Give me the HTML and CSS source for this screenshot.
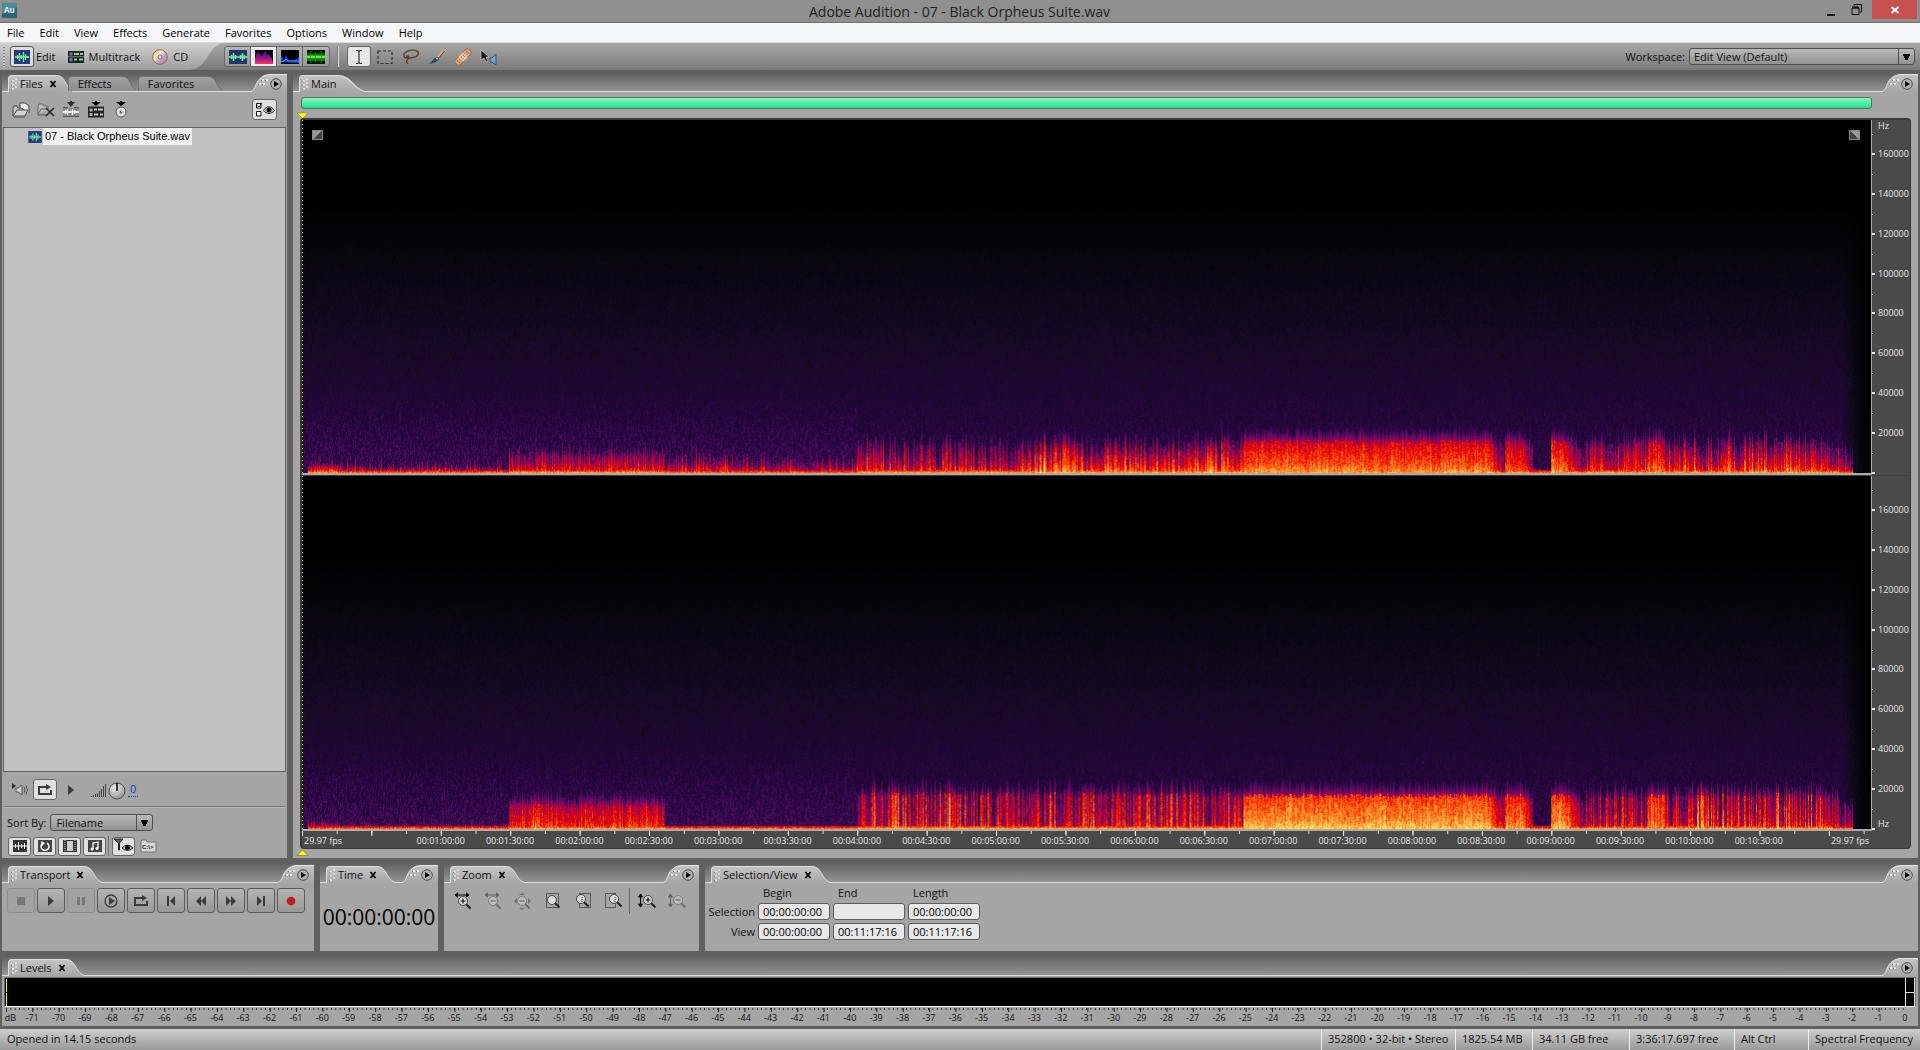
FILE: index.html
```html
<!DOCTYPE html>
<html lang="en">
<head>
<meta charset="utf-8">
<title>Adobe Audition - 07 - Black Orpheus Suite.wav</title>
<link rel="stylesheet" href="styles.css">
</head>
<body>
<svg class="defs" aria-hidden="true">
  <defs>
    <linearGradient id="tabFill" x1="0" y1="0" x2="0" y2="1"><stop offset="0" stop-color="#c4c4c4"/><stop offset="1" stop-color="#a6a6a6"/></linearGradient>
    <linearGradient id="tabDim" x1="0" y1="0" x2="0" y2="1"><stop offset="0" stop-color="#a2a2a2"/><stop offset="1" stop-color="#8c8c8c"/></linearGradient>
    <linearGradient id="barFill" x1="0" y1="0" x2="0" y2="1"><stop offset="0" stop-color="#cfcfcf"/><stop offset="1" stop-color="#9e9e9e"/></linearGradient>
    <radialGradient id="knob" cx=".4" cy=".3" r=".8"><stop offset="0" stop-color="#eee"/><stop offset="1" stop-color="#888"/></radialGradient>
    <linearGradient id="disc" x1="0" y1="0" x2="1" y2="1"><stop offset="0" stop-color="#f0a050"/><stop offset=".35" stop-color="#fff0b0"/><stop offset=".6" stop-color="#b8a0e0"/><stop offset="1" stop-color="#d08030"/></linearGradient>
    <linearGradient id="pinkSpec" x1="0" y1="0" x2="0" y2="1"><stop offset="0" stop-color="#3a1080"/><stop offset=".6" stop-color="#a0188c"/><stop offset="1" stop-color="#ff3060"/></linearGradient>
  </defs>
  <symbol id="i-wave" viewBox="0 0 16 14"><rect width="16" height="14" fill="#2a3a7c"/><path d="M1 7h14M3.500 5v4M5.500 3v8M7.500 5v4M9.500 2v10M11.500 4v6M13.500 6v2" stroke="#6df29a" stroke-width="1.300" fill="none"/></symbol>
  <symbol id="i-wave2" viewBox="0 0 18 14"><rect width="18" height="14" fill="#26346f"/><path d="M0 7h18M2.500 5v4M4.500 3v8M6.500 5v4M11.500 5v4M13.500 3v8M15.500 5v4" stroke="#6df29a" stroke-width="1.600" fill="none"/></symbol>
  <symbol id="i-spec" viewBox="0 0 18 14"><rect width="18" height="14" fill="#08040c"/><path d="M0 14V8l2-5 2-1 1 3 2 1 2-4 2-1 1 4 2-1 1 3 2 1 1 6z" fill="url(#pinkSpec)"/></symbol>
  <symbol id="i-pan" viewBox="0 0 18 14"><rect width="18" height="14" fill="#000"/><path d="M0 12V6l2 2 1 2 2-5 2 4 2 1 3 0 3-1 3-2v6z" fill="#1240d8"/><path d="M0 12l3-1 2-2 2 2h11" stroke="#3c8cff" fill="none"/></symbol>
  <symbol id="i-phase" viewBox="0 0 18 14"><rect width="18" height="14" fill="#021a02"/><path d="M0 4.500h18M0 10h18" stroke="#0c7a10" stroke-width="2"/><path d="M0 7h18" stroke="#54f030" stroke-width="3"/><path d="M3.500 1v12M8.500 2v10M14.500 1v12" stroke="#1c9a1c" opacity=".6"/></symbol>
  <symbol id="i-multi" viewBox="0 0 16 12"><rect width="16" height="12" fill="#1c2020"/><path d="M1.500 1.500h3v3h-3zM1.500 7h3v3.500h-3z" fill="#6a7a9a"/><path d="M6 3h5M12 3h3M6 8.500h3M11 8.500h4" stroke="#8ccf98" stroke-width="2.200"/><path d="M0 5.700h16" stroke="#aaa" stroke-width=".7"/></symbol>
  <symbol id="i-cd" viewBox="0 0 16 16"><circle cx="8" cy="8" r="7.300" fill="url(#disc)" stroke="#7a5c40" stroke-width=".8"/><circle cx="8" cy="8" r="2" fill="#ddd" stroke="#777"/></symbol>
  <symbol id="i-ibeam" viewBox="0 0 16 16"><path d="M5 1.500h2L8 2.500l1-1h2M5 14.500h2l1-1 1 1h2M8 2.500v11" stroke="#333" fill="none" stroke-width="1.200"/></symbol>
  <symbol id="i-marquee" viewBox="0 0 16 16"><rect x="1" y="2" width="14" height="12.500" fill="none" stroke="#2c2c34" stroke-dasharray="3 2" stroke-width="1.200"/></symbol>
  <symbol id="i-lasso" viewBox="0 0 18 16"><path d="M5 9C1 9 1 5 4 3s10-3 12 0-3 6-8 6c-3 0-4-1-3-2s3 1 1 3-1 4 0 5" fill="none" stroke="#5c4028" stroke-width="1.400"/></symbol>
  <symbol id="i-brush" viewBox="0 0 18 16"><path d="M16 1L9 9" stroke="#d8b078" stroke-width="2"/><path d="M16.500 2L10 10" stroke="#604020"/><path d="M10 8l1 2c-2 3-5 4-10 5 3-2 4-5 6-6z" fill="#24486c"/><path d="M8 9l2 1" stroke="#cfe0f0"/></symbol>
  <symbol id="i-heal" viewBox="0 0 18 18"><g transform="rotate(-45 9 9)"><rect x="-1" y="5.500" width="20" height="7" rx="3.500" fill="#d9a27c" stroke="#946448" stroke-width=".8"/><rect x="6" y="5.500" width="6" height="7" fill="#eec8a8"/><path d="M2 8h1M2 10h1M7.500 8h1M7.500 10h1M10 8h1M10 10h1M15 8h1M15 10h1" stroke="#7c4c34"/></g></symbol>
  <symbol id="i-scrub" viewBox="0 0 18 16"><path d="M1 1v10l3-2 2 4 2-1-2-4h3z" fill="#111" stroke="#ddd" stroke-width=".6"/><path d="M10 9h2l4-4v11l-4-3h-2z" fill="#7aa8cc" stroke="#24405c" stroke-width=".8"/></symbol>
  <symbol id="i-open" viewBox="0 0 18 16"><path d="M8 7V1h5l4 3v7" fill="#eee" stroke="#444"/><path d="M1 14V6l1-2h3l1 2h3l2 1v1" fill="#c8c8c8" stroke="#444"/><path d="M1 14l4-6h11l-3 6z" fill="#d4d4d4" stroke="#444"/><path d="M2 15.500h11" stroke="#777"/></symbol>
  <symbol id="i-close" viewBox="0 0 18 16"><path d="M1 13V4l1-2h4l1 2h4v3M1 13l3-6h7" fill="#bcbcbc" stroke="#666"/><path d="M1 13h9" stroke="#555"/><path d="M9 6l8 8M17 6l-8 8" stroke="#222" stroke-width="1.500"/></symbol>
  <symbol id="i-insw" viewBox="0 0 16 17"><path d="M4 1h8L8 6zM7 0h2v2H7z" fill="#333"/><path d="M0 6.500h5M11 6.500h5M0 15.500h16" stroke="#555"/><rect y="7" width="16" height="8" fill="#888"/><path d="M0 11h16M2.500 9v4M4.500 8v6M6.500 10v2M9.500 8v6M11.500 9v4M13.500 10v2" stroke="#fff" stroke-width="1.300"/></symbol>
  <symbol id="i-insm" viewBox="0 0 16 17"><path d="M3 1h10L8 5zM7 0h2v2H7z" fill="#000"/><rect y="5.500" width="16" height="11" fill="#222"/><path d="M1.500 7.500h3v3h-3zM1.500 12h3v3h-3z" fill="#aaa"/><path d="M6 8.500h3M10 8.500h5M6 13.500h4M12 13.500h3" stroke="#c8c8c8" stroke-width="1.800"/></symbol>
  <symbol id="i-inscd" viewBox="0 0 14 17"><path d="M2 1h10L7 5zM6 0h2v2H6z" fill="#000"/><circle cx="7" cy="11" r="5" fill="#ddd" stroke="#555"/><circle cx="7" cy="11" r="1.500" fill="#555"/><path d="M7 11l4-3" stroke="#fff"/></symbol>
  <symbol id="i-opts" viewBox="0 0 20 14"><path d="M1.500.500h4.500v4.500H1.500zM1.500 8.500h4.500v4.500H1.500z" fill="#fff" stroke="#111"/><path d="M2.500 2.500l1.500 1.500 3-4" stroke="#111" fill="none"/><path d="M8.500 7.500c2.500-5 8-5 11 0-3 4-8 4-11 0z" fill="#bbb" stroke="#333"/><circle cx="14" cy="7" r="2.500" fill="#111"/></symbol>
  <symbol id="i-speaker" viewBox="0 0 16 14"><path d="M0 0v6l4-3z" fill="#333"/><path d="M4 5h2l4-3v10L6 9H4z" fill="#ccc" stroke="#555"/><path d="M12 4q2 3 0 6M14 2.500q3 4.500 0 9" stroke="#555" fill="none"/></symbol>
  <symbol id="i-loop" viewBox="0 0 16 12"><path d="M5 3H2v7h12V6" fill="none" stroke="#3c3c3c" stroke-width="2"/><path d="M5 3h4" stroke="#3c3c3c" stroke-width="2"/><path d="M9 0l5 3-5 3z" fill="#3c3c3c"/></symbol>
  <symbol id="i-play" viewBox="0 0 10 12"><path d="M2 1l6 5-6 5z" fill="#3c3c3c"/></symbol>
  <symbol id="i-stop" viewBox="0 0 10 10"><rect x="1" y="1" width="8" height="8" fill="#777"/></symbol>
  <symbol id="i-pause" viewBox="0 0 10 10"><path d="M1 1h3v8H1zM6 1h3v8H6z" fill="#777"/></symbol>
  <symbol id="i-playc" viewBox="0 0 14 14"><circle cx="7" cy="7" r="6" fill="none" stroke="#3c3c3c" stroke-width="1.300"/><path d="M5 3l6 4-6 4z" fill="#3c3c3c"/></symbol>
  <symbol id="i-begin" viewBox="0 0 12 12"><path d="M2 1h2v10H2zM10 1v10L5 6z" fill="#3c3c3c"/></symbol>
  <symbol id="i-rew" viewBox="0 0 12 12"><path d="M6 1v10L1 6zM11 1v10L6 6z" fill="#3c3c3c"/></symbol>
  <symbol id="i-ff" viewBox="0 0 12 12"><path d="M1 1v10l5-5zM6 1v10l5-5z" fill="#3c3c3c"/></symbol>
  <symbol id="i-end" viewBox="0 0 12 12"><path d="M8 1h2v10H8zM2 1v10l5-5z" fill="#3c3c3c"/></symbol>
  <symbol id="i-rec" viewBox="0 0 10 10"><circle cx="5" cy="5" r="4.300" fill="#c01c1c"/></symbol>
  <symbol id="i-dots" viewBox="0 0 7 13"><path d="M1 2h2v2H1zM1 6h2v2H1zM1 10h2v2H1zM4 4h2v2H4zM4 8h2v2H4zM4 0h2v2H4z" fill="#ddd"/><path d="M0 3h1v1H0zM0 7h1v1H0zM0 11h1v1H0z" fill="#777"/></symbol>
  <symbol id="i-menu" viewBox="0 0 36 18"><path d="M0 17.500C5 16 4 9 9 4.500Q13 .5 18 .5H36V18H0z" fill="url(#tabFill)"/><path d="M0 17.500C5 16 4 9 9 4.500Q13 .5 18 .5H36" fill="none" stroke="#e4e4e4"/><path d="M8 9h2v2H8zM12 9h2v2h-2zM11 5h2v2h-2zM15 5h2v2h-2z" fill="#e4e4e4"/><path d="M7 10h1v1H7zM11 10h1v1h-1zM10 6h1v1h-1zM14 6h1v1h-1z" fill="#777"/><circle cx="25" cy="10" r="5.300" fill="#b0b0b0" stroke="#4c4c4c"/><path d="M23 7v6l5-3z" fill="#000"/></symbol>
  <symbol id="i-curve" viewBox="0 0 18 17" preserveAspectRatio="none"><path d="M0 .5C10 .5 9 13 18 16.500V17H0z" fill="url(#tabFill)"/><path d="M0 .5C10 .5 9 13 18 16.500" fill="none" stroke="#dedede"/></symbol>
  <symbol id="i-curvedim" viewBox="0 0 18 17" preserveAspectRatio="none"><path d="M0 1.500C10 1.500 9 13 16 16V17H0z" fill="url(#tabDim)"/><path d="M0 1.500C10 1.500 9 13 16 16" fill="none" stroke="#6a6a6a"/></symbol>
  <symbol id="i-x" viewBox="0 0 8 8"><path d="M1.500 1l5 6M6.500 1l-5 6" stroke="#000" stroke-width="1.700"/></symbol>
  <symbol id="i-lens" viewBox="0 0 16 16"><path d="M9.500 9.500l5 5" stroke="#222" stroke-width="2"/><circle cx="7" cy="7" r="4.500" fill="#ddd" stroke="#444"/></symbol>
  <symbol id="i-harrow" viewBox="0 0 16 6"><path d="M1 3h14M4 .8L1 3l3 2.200M12 .8L15 3l-3 2.200" stroke="#000" fill="#000"/></symbol>
  <symbol id="i-plus" viewBox="0 0 6 6"><path d="M.5 3h5M3 .5v5" stroke="#111" stroke-width="1.200"/></symbol>
  <symbol id="i-minus" viewBox="0 0 6 6"><path d="M.5 3h5" stroke="#111" stroke-width="1.200"/></symbol>
</svg>

<div class="app">
  <header class="titlebar">
    <svg class="logo" viewBox="0 0 15 15"><rect width="15" height="15" fill="#2c6474"/><path d="M0 0h15v4L0 11z" fill="#4a8a98"/><text x="2" y="10" class="logo-text">Au</text></svg>
    <h1>Adobe Audition - 07 - Black Orpheus Suite.wav</h1>
    <div class="winbtns">
      <button aria-label="Minimize"><svg width="12" height="14"><path d="M2 12h8" stroke="#111" stroke-width="2"/></svg></button>
      <button aria-label="Restore"><svg width="12" height="12"><path d="M3 2V.5h7.500V8H9" fill="none" stroke="#111"/><path d="M1 4h7v6.500H1z" fill="none" stroke="#111"/><path d="M1 3.500h7" stroke="#111" stroke-width="2"/></svg></button>
      <button class="close" aria-label="Close"><svg width="10" height="10"><path d="M1.500 2l7 6M8.500 2l-7 6" stroke="#fff" stroke-width="1.800"/></svg></button>
    </div>
  </header>

  <nav class="menubar">
    <a href="#">File</a><a href="#">Edit</a><a href="#">View</a><a href="#">Effects</a><a href="#">Generate</a><a href="#">Favorites</a><a href="#">Options</a><a href="#">Window</a><a href="#">Help</a>
  </nav>

  <div class="toolbar">
    <div class="modes">
      <i class="grip"></i>
      <button class="mode"><span class="framed"><svg width="16" height="14"><use href="#i-wave"/></svg></span>Edit</button>
      <button class="mode"><svg width="16" height="12"><use href="#i-multi"/></svg>Multitrack</button>
      <button class="mode"><svg width="16" height="16"><use href="#i-cd"/></svg>CD</button>
    </div>
    <svg class="modes-end" viewBox="0 0 36 27"><path d="M0 0h36C18 2 22 26 0 27z" fill="url(#barFill)"/></svg>
    <div class="views">
      <button aria-label="Waveform view"><svg width="18" height="14"><use href="#i-wave2"/></svg></button>
      <button class="on" aria-label="Spectral frequency view"><svg width="18" height="14"><use href="#i-spec"/></svg></button>
      <button aria-label="Spectral pan view"><svg width="18" height="14"><use href="#i-pan"/></svg></button>
      <button aria-label="Spectral phase view"><svg width="18" height="14"><use href="#i-phase"/></svg></button>
    </div>
    <i class="sep"></i>
    <div class="tools">
      <button class="on" aria-label="Time selection"><svg width="16" height="16"><use href="#i-ibeam"/></svg></button>
      <button aria-label="Marquee selection"><svg width="16" height="16"><use href="#i-marquee"/></svg></button>
      <button aria-label="Lasso selection"><svg width="18" height="16"><use href="#i-lasso"/></svg></button>
      <button aria-label="Effects paintbrush"><svg width="18" height="16"><use href="#i-brush"/></svg></button>
      <button aria-label="Spot healing"><svg width="18" height="18"><use href="#i-heal"/></svg></button>
      <button aria-label="Scrub"><svg width="18" height="16"><use href="#i-scrub"/></svg></button>
    </div>
    <label class="wslabel" for="ws">Workspace:</label>
    <span class="drop ws"><select id="ws"><option>Edit View (Default)</option></select></span>
  </div>

  <div class="work">
    <section class="panel files">
      <div class="head">
        <button class="tab"><svg width="7" height="13"><use href="#i-dots"/></svg>Files<svg class="x" width="8" height="8"><use href="#i-x"/></svg></button><svg class="curve" width="16" height="17"><use href="#i-curve"/></svg>
        <button class="tab dim">Effects</button><svg class="curve" width="16" height="17"><use href="#i-curvedim"/></svg>
        <button class="tab dim">Favorites</button><svg class="curve" width="16" height="17"><use href="#i-curvedim"/></svg>
        <svg class="pmenu" width="36" height="18"><use href="#i-menu"/></svg>
      </div>
      <div class="filebar">
        <button aria-label="Import file"><svg width="18" height="16"><use href="#i-open"/></svg></button>
        <button aria-label="Close file"><svg width="18" height="16"><use href="#i-close"/></svg></button>
        <button aria-label="Edit file"><svg width="16" height="17"><use href="#i-insw"/></svg></button>
        <button aria-label="Insert into multitrack"><svg width="16" height="17"><use href="#i-insm"/></svg></button>
        <button aria-label="Insert into CD"><svg width="14" height="17"><use href="#i-inscd"/></svg></button>
        <button class="boxed last" aria-label="Show options"><svg width="20" height="14"><use href="#i-opts"/></svg></button>
      </div>
      <ul class="filelist">
        <li><svg width="14" height="12" viewBox="0 0 16 14"><use href="#i-wave"/></svg><span>07 - Black Orpheus Suite.wav</span></li>
      </ul>
      <div class="preview">
        <svg width="16" height="14"><use href="#i-speaker"/></svg>
        <button class="boxed" aria-label="Loop preview"><svg width="16" height="12"><use href="#i-loop"/></svg></button>
        <button class="plain" aria-label="Play preview"><svg width="10" height="12"><use href="#i-play"/></svg></button>
        <svg width="16" height="14"><path d="M.5 14v-1M2.500 14v-2M4.500 14v-3M6.500 14v-4M8.500 14v-6M10.500 14v-8M12.500 14v-11M14.500 14v-13" stroke="#444"/></svg>
        <svg class="knob" width="18" height="18"><circle cx="9" cy="9" r="8" fill="url(#knob)" stroke="#555"/><path d="M9 9V1" stroke="#000" stroke-width="1.500"/></svg>
        <a class="vol" href="#">0</a>
      </div>
      <div class="sort">
        <label for="sort">Sort By:</label>
        <span class="drop"><select id="sort"><option>Filename</option></select></span>
      </div>
      <div class="filters">
        <button class="boxed" aria-label="Show audio files"><svg width="14" height="12"><rect width="14" height="12" fill="#333"/><path d="M0 6h14M2.500 4v4M5.500 2v8M8.500 4v4M11.500 3v6" stroke="#fff"/></svg></button>
        <button class="boxed" aria-label="Show loop files"><svg width="14" height="12"><rect width="14" height="12" fill="#444"/><path d="M5 3a4 4 0 1 0 4 0" fill="none" stroke="#fff" stroke-width="1.500"/><path d="M3 1l4 2-3 3z" fill="#fff"/></svg></button>
        <button class="boxed" aria-label="Show video files"><svg width="14" height="12"><rect width="14" height="12" fill="#333"/><path d="M4 1h6v10H4z" fill="#ccc"/><path d="M2 0v12M12 0v12" stroke="#ddd" stroke-dasharray="1 1"/></svg></button>
        <button class="boxed" aria-label="Show MIDI files"><svg width="14" height="12"><rect width="14" height="12" fill="#444"/><path d="M5 9V3l5-1v6" fill="none" stroke="#fff" stroke-width="1.300"/><circle cx="4" cy="9" r="1.500" fill="#fff"/><circle cx="9" cy="8.500" r="1.500" fill="#fff"/></svg></button>
        <i class="sep"></i>
        <button class="boxed" aria-label="Show markers"><svg width="20" height="14"><path d="M0 0h9L5.500 4v7h-1V4z" fill="#555" stroke="#222"/><path d="M8 9q5-6 11 0-6 5-11 0z" fill="#aaa" stroke="#333"/><circle cx="13.500" cy="8.500" r="2.500" fill="#111"/></svg></button>
        <button class="plain" aria-label="Show full paths"><svg width="18" height="14"><path d="M1 13V2l1-1h4l1 2h9v10z" fill="#d8d8d8" stroke="#777"/><text x="2" y="10" class="path-text">C:\&gt;</text></svg></button>
      </div>
    </section>

    <section class="panel main">
      <div class="head">
        <button class="tab"><svg width="7" height="13"><use href="#i-dots"/></svg>Main</button><svg class="curve" width="28" height="17"><use href="#i-curve"/></svg>
        <svg class="pmenu" width="36" height="18"><use href="#i-menu"/></svg>
      </div>
      <div class="range"></div>
      <svg class="playhead" width="11" height="6"><path d="M0 0h11L5.500 5.500z" fill="#ff0" stroke="#774"  stroke-width=".5"/></svg>
      <div class="plot">
        <div class="channel">
          <div class="view"><canvas id="left"></canvas><i class="fade in"></i><i class="fade out"></i></div>
          <div class="axis upper"></div>
        </div>
        <div class="channel">
          <div class="view"><canvas id="right"></canvas></div>
          <div class="axis lower"></div>
        </div>
        <div class="timeline"></div>
      </div>
      <svg class="playhead" width="11" height="6"><path d="M0 5.500h11L5.500 0z" fill="#ff0" stroke="#552" stroke-width=".5"/></svg>
    </section>
  </div>

  <div class="dock">
    <section class="panel transport">
      <div class="head">
        <button class="tab"><svg width="7" height="13"><use href="#i-dots"/></svg>Transport<svg class="x" width="8" height="8"><use href="#i-x"/></svg></button><svg class="curve" width="18" height="17"><use href="#i-curve"/></svg>
        <svg class="pmenu" width="36" height="18"><use href="#i-menu"/></svg>
      </div>
      <div class="tbtns">
        <button disabled aria-label="Stop"><svg width="10" height="10"><use href="#i-stop"/></svg></button>
        <button aria-label="Play"><svg width="10" height="12"><use href="#i-play"/></svg></button>
        <button disabled aria-label="Pause"><svg width="10" height="10"><use href="#i-pause"/></svg></button>
        <button aria-label="Play to end"><svg width="14" height="14"><use href="#i-playc"/></svg></button>
        <button aria-label="Play looped"><svg width="16" height="12"><use href="#i-loop"/></svg></button>
        <button aria-label="Go to beginning"><svg width="12" height="12"><use href="#i-begin"/></svg></button>
        <button aria-label="Rewind"><svg width="12" height="12"><use href="#i-rew"/></svg></button>
        <button aria-label="Fast forward"><svg width="12" height="12"><use href="#i-ff"/></svg></button>
        <button aria-label="Go to end"><svg width="12" height="12"><use href="#i-end"/></svg></button>
        <button aria-label="Record"><svg width="10" height="10"><use href="#i-rec"/></svg></button>
      </div>
    </section>
    <section class="panel time">
      <div class="head">
        <button class="tab"><svg width="7" height="13"><use href="#i-dots"/></svg>Time<svg class="x" width="8" height="8"><use href="#i-x"/></svg></button><svg class="curve" width="18" height="17"><use href="#i-curve"/></svg>
        <svg class="pmenu" width="36" height="18"><use href="#i-menu"/></svg>
      </div>
      <output class="clock">00:00:00:00</output>
    </section>
    <section class="panel zoom">
      <div class="head">
        <button class="tab"><svg width="7" height="13"><use href="#i-dots"/></svg>Zoom<svg class="x" width="8" height="8"><use href="#i-x"/></svg></button><svg class="curve" width="18" height="17"><use href="#i-curve"/></svg>
        <svg class="pmenu" width="36" height="18"><use href="#i-menu"/></svg>
      </div>
      <div class="zbtns">
        <button aria-label="Zoom in horizontally"><svg width="18" height="18"><use href="#i-harrow" width="16" height="6"/><use href="#i-lens" x="2" y="2" width="16" height="16"/><use href="#i-plus" x="6" y="6" width="6" height="6"/></svg></button>
        <button disabled aria-label="Zoom out horizontally"><svg width="18" height="18"><use href="#i-harrow" width="16" height="6"/><use href="#i-lens" x="2" y="2" width="16" height="16"/><use href="#i-minus" x="6" y="6" width="6" height="6"/></svg></button>
        <button disabled aria-label="Zoom out full"><svg width="18" height="18"><path d="M0 9l3-3v6zM17 9l-3-3v6zM8 1l3 2H5zM8 18l3-2H5z" fill="#222"/><use href="#i-lens" x="1" y="2" width="16" height="16"/><use href="#i-minus" x="5" y="6" width="6" height="6"/></svg></button>
        <button aria-label="Zoom to selection"><svg width="18" height="18"><rect x="2.500" y="1.500" width="12" height="14" fill="none" stroke="#111" stroke-dasharray="1 1"/><use href="#i-lens" x="1" y="1" width="16" height="16"/></svg></button>
        <button aria-label="Zoom to left edge"><svg width="18" height="18"><rect x="5.500" y="1.500" width="11" height="14" fill="none" stroke="#111" stroke-dasharray="1 1"/><use href="#i-lens" width="16" height="16"/><path d="M8 5v5" stroke="#111" stroke-dasharray="1 1"/></svg></button>
        <button aria-label="Zoom to right edge"><svg width="18" height="18"><rect x="1.500" y="1.500" width="10" height="14" fill="none" stroke="#111" stroke-dasharray="1 1"/><use href="#i-lens" x="3" width="16" height="16"/><path d="M11 5v5" stroke="#111" stroke-dasharray="1 1"/></svg></button>
        <i class="sep"></i>
        <button aria-label="Zoom in vertically"><svg width="18" height="18"><path d="M2.500 2v13M.5 5l2-3 2 3zM.5 12l2 3 2-3z" stroke="#000"/><use href="#i-lens" x="3" y="1" width="16" height="16"/><use href="#i-plus" x="7" y="5" width="6" height="6"/></svg></button>
        <button disabled aria-label="Zoom out vertically"><svg width="18" height="18"><path d="M2.500 2v13M.5 5l2-3 2 3zM.5 12l2 3 2-3z" stroke="#000"/><use href="#i-lens" x="3" y="1" width="16" height="16"/><use href="#i-minus" x="7" y="5" width="6" height="6"/></svg></button>
      </div>
    </section>
    <section class="panel selview">
      <div class="head">
        <button class="tab"><svg width="7" height="13"><use href="#i-dots"/></svg>Selection/View<svg class="x" width="8" height="8"><use href="#i-x"/></svg></button><svg class="curve" width="18" height="17"><use href="#i-curve"/></svg>
        <svg class="pmenu" width="36" height="18"><use href="#i-menu"/></svg>
      </div>
      <div class="fields">
        <span></span><span class="col">Begin</span><span class="col">End</span><span class="col">Length</span>
        <label class="row" for="sb">Selection</label><input id="sb" value="00:00:00:00"><input aria-label="Selection end" value=""><input aria-label="Selection length" value="00:00:00:00">
        <label class="row" for="vb">View</label><input id="vb" value="00:00:00:00"><input aria-label="View end" value="00:11:17:16"><input aria-label="View length" value="00:11:17:16">
      </div>
    </section>
  </div>

  <section class="panel levels">
    <div class="head">
      <button class="tab"><svg width="7" height="13"><use href="#i-dots"/></svg>Levels<svg class="x" width="8" height="8"><use href="#i-x"/></svg></button><svg class="curve" width="18" height="17"><use href="#i-curve"/></svg>
      <svg class="pmenu" width="36" height="18"><use href="#i-menu"/></svg>
    </div>
    <div class="meters"><div class="meter"></div><div class="clips"><i></i><i></i></div></div>
    <div class="lticks"></div>
    <div class="lscale"><span class="db">dB</span></div>
  </section>

  <footer class="status">
    <span class="msg">Opened in 14.15 seconds</span>
    <span class="s1">352800 • 32-bit • Stereo</span><span class="s2">1825.54 MB</span><span class="s3">34.11 GB free</span><span class="s4">3:36:17.697 free</span><span class="s5">Alt Ctrl</span><span class="s6">Spectral Frequency</span>
  </footer>
</div>
<script src="app.js"></script>
</body>
</html>
```
FILE: styles.css
```css
* { box-sizing: border-box; }
body { margin: 0; background: #606060; color: #111; font: 11px/14px "Open Sans", "Noto Sans", sans-serif; }
button { font: inherit; color: inherit; background: none; border: 0; padding: 0; margin: 0; display: flex; align-items: center; justify-content: center; }
svg { display: block; flex: none; overflow: visible; }
.defs { position: absolute; width: 0; height: 0; }
.app { display: flex; flex-direction: column; min-height: 100vh; }

.titlebar { height: 23px; background: #8f8f8f; border-bottom: 1px solid #6c6f72; display: grid; grid-template-columns: 1fr auto 1fr; align-items: start; padding: 0 3px 0 2px; }
.titlebar h1 { margin: 0; font-size: 14px; font-weight: 400; line-height: 23px; color: #222; }
.logo { width: 15px; height: 15px; margin-top: 3px; }
.logo-text { font: bold 8px "Open Sans", sans-serif; fill: #e4f4f4; }
.winbtns { display: flex; justify-content: flex-end; }
.winbtns button { width: 26px; height: 19px; }
.winbtns .close { width: 45px; background: #c75050; margin-left: 2px; }

.menubar { height: 20px; background: #f4f6f8; border-bottom: 1px solid #dadada; display: flex; gap: 15px; padding: 0 7px; }
.menubar a { color: #000; text-decoration: none; line-height: 19px; }

.toolbar { height: 27px; display: flex; align-items: center; background: linear-gradient(#a8a8a8, #7a7a7a); padding-right: 5px; }
.modes { align-self: stretch; display: flex; align-items: center; background: linear-gradient(#cfcfcf, #9e9e9e); padding-left: 3px; }
.modes-end { width: 36px; height: 27px; }
.grip { width: 2px; height: 20px; background: repeating-linear-gradient(#777 0 1px, #ccc 1px 3px); margin-right: 5px; }
.mode { gap: 5px; margin-right: 12px; }
.mode:first-of-type { gap: 2px; }
.mode:last-of-type { margin-right: 0; }
.framed { display: flex; padding: 3px 3px 2px; border: 1px solid #555; border-radius: 3px; background: #ddd; }
.views { display: flex; border: 1px solid #666; border-radius: 3px; background: linear-gradient(#b4b4b4, #989898); }
.views button { width: 26px; height: 19px; border-right: 1px solid #666; }
.views button:last-child { border: 0; }
.views .on { background: #ececec; }
.sep { width: 1px; height: 20px; background: #ddd; border-left: 1px solid #777; box-sizing: content-box; }
.toolbar .sep { margin: 0 8px 0 7px; }
.tools { display: flex; gap: 2px; margin-right: auto; }
.tools button { width: 24px; height: 21px; border-radius: 3px; }
.tools .on { background: #e6e6e6; border: 1px solid #666; }
.wslabel { margin-right: 4px; }
.drop { position: relative; display: flex; border: 1px solid #4e4e4e; border-radius: 3px; background: linear-gradient(#b8b8b8, #929292); height: 17px; width: 103px; }
.drop select { flex: 1; appearance: none; border: 0; background: none; font: inherit; line-height: 14px; color: #111; padding: 0 5px; }
.drop::after { content: ""; width: 15px; border-left: 1px solid #4e4e4e; background: linear-gradient(#000, #000) center 5px / 7px 2px no-repeat, linear-gradient(#000, #000) center 7px / 5px 2px no-repeat, linear-gradient(#000, #000) center 9px / 3px 2px no-repeat; }
.drop.ws { width: 226px; }
.ws select { padding: 0 4px; }

.work { flex: 1; display: grid; grid-template-columns: 285px 1fr; gap: 6px; padding: 0 2px; }
.panel { display: flex; flex-direction: column; background: #a5a5a5; min-width: 0; }
.head { height: 25px; flex: none; display: flex; align-items: flex-end; padding-left: 6px; background: linear-gradient(#606060 20%, #949494); border-bottom: 1px solid #dcdcdc; }
.work .head { height: 22px; }
.head .tab { height: 17px; margin-bottom: -1px; padding-left: 2px; gap: 2px; border: 1px solid #dedede; border-width: 1px 0 0 1px; border-radius: 4px 0 0 0; background: linear-gradient(#c4c4c4, #a6a6a6); }
.head .curve, .head .pmenu { margin-bottom: -1px; }
.head .pmenu { margin-left: auto; }
.head .x { margin-left: 4px; }
.head .dim { height: 15px; margin-bottom: 0; background: linear-gradient(#a2a2a2, #8c8c8c); border-color: #747474; padding: 0 10px 0 9px; margin-left: -5px; }
.head .dim:nth-of-type(3) { padding-right: 14px; margin-left: 0; }
.head .dim + .curve { margin-bottom: 0; height: 16px; }

.filebar { display: flex; align-items: center; height: 35px; padding: 0 10px 0 6px; }
.filebar button { width: 25px; }
.boxed { height: 19px; border: 1px solid #666; border-radius: 3px; background: #e0e0e0; }
.filebar .last { height: 21px; width: 25px; margin-left: auto; }
.filelist { flex: 1; margin: 0 1px; padding: 0 24px; list-style: none; border: 1px solid #606060; background: #c2c2c2; }
.filelist li { display: flex; align-items: center; gap: 1px; }
.filelist span { background: #f0f0f0; padding: 0 2px; line-height: 17px; font-family: "Liberation Sans", Arial, sans-serif; color: #000; }
.preview { display: flex; align-items: center; height: 35px; margin: 0 2px; padding: 1px 0 0 8px; border-bottom: 1px solid #777; box-shadow: 0 1px #b8b8b8; }
.preview .boxed { width: 24px; height: 21px; margin: 0 9px 0 5px; }
.preview .plain { margin-right: 15px; }
.preview .knob { margin: 2px 1px 0; }
.vol { color: #1240c0; text-decoration: none; border-bottom: 1px dotted #1240c0; padding: 0 2px; margin-left: 1px; }
.sort { display: flex; align-items: center; gap: 4px; height: 28px; padding: 3px 0 0 5px; }
.filters { display: flex; align-items: center; gap: 2px; height: 22px; padding: 0 6px; margin-bottom: 1px; }
.filters .boxed { width: 23px; }
.filters .sep { background: none; }
.filters .plain { margin-left: 3px; }
.path-text { font: bold 6px "Liberation Sans", sans-serif; fill: #222; }

.main { padding-bottom: 2px; }
.range { height: 12px; margin: 5px 46px 4px 8px; border: 1px solid #5c6c62; border-radius: 3px; background: linear-gradient(#86f6c0, #22e08c); }
.playhead { margin-left: 4px; height: 6px; }
.plot { flex: 1; display: flex; flex-direction: column; margin: -1px 7px 1px 7px; border: 2px solid #3a3a3a; border-width: 2px 1px 1px 2px; border-radius: 4px; background: #4a4a4a; }
.channel { flex: 1; display: flex; }
.channel + .channel { border-top: 1px solid #3c4040; }
.view { flex: 1; position: relative; border-right: 1px solid #aaa; border-bottom: 2px solid #aaa; background: #000; }
.view canvas { position: absolute; inset: 0; width: 100%; height: 100%; }
.view::after { content: ""; position: absolute; left: 0; top: 0; bottom: 0; width: 1px; background: repeating-linear-gradient(#ff0 0 1px, #000 1px 4px); }
.fade { position: absolute; top: 10px; width: 11px; height: 10px; border: 1px solid #888; }
.fade.in { left: 10px; background: linear-gradient(135deg, #999 50%, #444 50%); }
.fade.out { right: 11px; background: linear-gradient(45deg, #444 50%, #999 50%); }
.axis { width: 38px; display: flex; flex-direction: column; font-size: 9px; color: #e8e8e8; }
.axis div { flex: 1; display: flex; align-items: center; padding-left: 6px; background: linear-gradient(#eee, #eee) 0 50% / 3px 2px no-repeat, linear-gradient(#eee, #eee) 0 0 / 1px 1px no-repeat; }
.axis .cap { flex: none; height: 14px; background: none; }
.axis .foot { flex: none; height: 22px; align-items: flex-end; background: linear-gradient(#eee, #eee) 0 19px / 3px 2px no-repeat, linear-gradient(#eee, #eee) 0 0 / 1px 1px no-repeat; }
.axis.upper .cap { align-items: flex-start; line-height: 12px; }
.timeline { height: 17px; margin-right: 38px; display: flex; align-items: flex-end; font-size: 9px; line-height: 14px; color: #e8e8e8; background: linear-gradient(90deg, #eee 1px, transparent 1px) 0 0 / calc(100% / 22.62) 5px repeat-x, linear-gradient(90deg, #ddd 1px, transparent 1px) 0 0 / calc(100% / 45.24) 3px repeat-x; }
.timeline span { flex: 1 1 0; text-align: center; white-space: nowrap; }
.timeline .first { flex-grow: 1.47; text-align: left; padding-left: 2px; }
.timeline .end { flex-grow: 1.09; text-align: right; padding-right: 3px; }

.dock { height: 93px; display: grid; grid-template-columns: 312px 118px 255px 1fr; gap: 6px; padding: 0 2px; }
.tbtns { display: flex; gap: 2px; padding: 5px; }
.tbtns button { width: 28px; height: 25px; border: 1px solid #5c5c5c; border-radius: 3px; background: linear-gradient(#b4b4b4, #989898); }
.tbtns button:disabled { border-color: #8c8c8c; background: #a2a2a2; }
.clock { flex: 1; text-align: center; font-size: 21px; line-height: 68px; color: #000; }
.zbtns { display: flex; align-items: center; height: 36px; padding-left: 4px; }
.zbtns button { width: 30px; }
.zbtns button:disabled { opacity: .4; }
.zbtns .sep { height: 26px; background: none; border-color: #666; margin: 0 1px; }
.fields { display: grid; grid-template-columns: 48px repeat(3, 72px); gap: 3px; padding: 3px 2px; align-items: center; }
.fields .col { padding-left: 5px; }
.fields .row { text-align: right; }
.fields input { width: 72px; height: 17px; border: 1px solid #5c5c5c; border-radius: 3px; background: #e8e8e8; font: inherit; line-height: 14px; padding: 0 4px; color: #000; }

.levels { height: 75px; margin: 0 2px; }
.meters { display: flex; height: 30px; margin: 1px 2px 0; border: 1px solid #6c6c6c; border-bottom-color: #eee; }
.meter { flex: 1; background: linear-gradient(#ff0, #ff0) 1px 1px / 1px 13px no-repeat, linear-gradient(#ff0, #ff0) 1px 15px / 1px 13px no-repeat, #000; border-right: 1px solid #eee; }
.clips { width: 9px; display: flex; flex-direction: column; gap: 1px; background: #ddd; padding-right: 1px; }
.clips i { flex: 1; background: #000; }
.lticks { height: 4px; margin: 1px 13px 0 4px; background: linear-gradient(90deg, #111 1px, transparent 1px) 0 0 / calc(100% / 72) 4px repeat-x, linear-gradient(90deg, #222 1px, transparent 1px) 0 0 / calc(100% / 432) 2px repeat-x; }
.lscale { display: flex; font-size: 9px; line-height: 12px; }
.lscale span { flex: 1 1 0; text-align: center; }
.lscale .db { flex: none; width: 17px; }

.status { height: 21px; margin-top: 3px; display: flex; align-items: stretch; background: linear-gradient(#cfcfcf, #999); line-height: 20px; white-space: nowrap; }
.status span { padding-left: 6px; border-left: 1px solid #eee; }
.status .msg { flex: 1; border: 0; padding-left: 7px; }
.s1 { width: 134px; } .s2 { width: 77px; } .s3 { width: 97px; } .s4 { width: 105px; } .s5 { width: 74px; } .s6 { width: 112px; }
```
FILE: app.js
```js
function add(parent, tag, text, cls) {
  const el = document.createElement(tag);
  el.textContent = text;
  if (cls) el.className = cls;
  parent.appendChild(el);
}

// Frequency rulers
document.querySelectorAll('.axis').forEach(axis => {
  const upper = axis.classList.contains('upper');
  add(axis, 'div', upper ? 'Hz' : '', 'cap');
  for (let f = 160000; f >= 20000; f -= 20000) add(axis, 'div', f);
  add(axis, 'div', upper ? '' : 'Hz', 'foot');
});

// Time ruler, one label every 30 seconds
const timeline = document.querySelector('.timeline');
add(timeline, 'span', '29.97 fps', 'first');
for (let s = 60; s <= 630; s += 30) {
  const m = String(Math.floor(s / 60)).padStart(2, '0');
  add(timeline, 'span', '00:' + m + ':' + (s % 60 ? '30' : '00') + ':00');
}
add(timeline, 'span', '29.97 fps', 'end');

// Level ruler
const scale = document.querySelector('.lscale');
for (let d = -71; d <= 0; d++) add(scale, 'span', d);

// Spectrogram palette
const stops = [
  [0, 0, 0, 0], [.1, 8, 6, 14], [.2, 22, 10, 36], [.3, 36, 6, 62], [.4, 76, 12, 92], [.5, 136, 8, 92],
  [.58, 200, 0, 40], [.68, 236, 16, 0], [.78, 255, 80, 12], [.88, 255, 150, 48], [1, 255, 230, 100]
];
function color(t) {
  t = Math.max(0, Math.min(1, t));
  let i = 1;
  while (stops[i][0] < t) i++;
  const a = stops[i - 1], b = stops[i], k = (t - a[0]) / (b[0] - a[0]);
  return [1, 2, 3].map(n => a[n] + (b[n] - a[n]) * k);
}
function rng(seed) {
  return () => {
    seed = (seed + 0x6D2B79F5) | 0;
    let t = Math.imul(seed ^ (seed >>> 15), 1 | seed);
    t = (t + Math.imul(t ^ (t >>> 7), 61 | t)) ^ t;
    return ((t ^ (t >>> 14)) >>> 0) / 4294967296;
  };
}

// Segments: end column, band height, level at the top of the band, level near the bottom,
// column variation, and 1 where the values glide from the previous segment
const leftCh = [
  [6, 0, 0, 0, 0], [36, 9, .4, .74, .16], [207, 7, .36, .58, .26], [363, 17, .46, .64, .16], [556, 14, .36, .6, .26],
  [720, 26, .4, .64, .3], [920, 26, .43, .74, .3], [942, 29, .5, .78, .26], [1187, 31, .6, .82, .1], [1204, 24, .38, .5, .1, 1],
  [1221, 30, .56, .76, .1], [1232, 22, .42, .5, .1, 1], [1250, 6, .2, .46, .1], [1262, 31, .6, .84, .1], [1284, 20, .34, .46, .1, 1],
  [1346, 27, .44, .66, .2], [1364, 30, .54, .76, .14], [1520, 28, .44, .72, .28], [1552, 18, .34, .5, .2, 1], [1570, 0, 0, 0, 0]
];
const rightCh = [
  [6, 0, 0, 0, 0], [36, 8, .34, .6, .16], [207, 4, .34, .44, .14], [363, 23, .56, .7, .15], [556, 3, .3, .4, .1],
  [920, 32, .54, .62, .38], [942, 32, .56, .68, .36], [1187, 33, .74, .9, .08], [1204, 28, .44, .52, .1, 1],
  [1221, 33, .7, .84, .1], [1232, 24, .44, .5, .1, 1], [1250, 6, .2, .44, .1], [1262, 33, .74, .9, .08], [1284, 24, .38, .46, .1, 1],
  [1346, 30, .5, .62, .34], [1364, 32, .7, .8, .14], [1520, 31, .52, .66, .36], [1552, 20, .34, .5, .2, 1], [1570, 0, 0, 0, 0]
];
function draw(id, segs, seed) {
  const cv = document.getElementById(id), W = 1570, H = 353, rand = rng(seed);
  cv.width = W;
  cv.height = H;
  const ctx = cv.getContext('2d'), img = ctx.createImageData(W, H);
  let si = 0, slow = 0;
  for (let x = 0; x < W; x++) {
    while (x >= segs[si][0]) si++;
    let [end, h, top, low, vary, glide] = segs[si];
    if (glide) {
      const p = segs[si - 1], k = (x - p[0]) / (end - p[0]);
      h = p[1] + (h - p[1]) * k;
      top = p[2] + (top - p[2]) * k;
      low = p[3] + (low - p[3]) * k;
    }
    slow = slow * .7 + (rand() - .5) * .6;
    const spike = vary * (Math.pow(rand(), 1.6) - .45 + slow * .5);
    const reach = h * (.92 + rand() * .14 + Math.max(0, spike) * .5);
    const fringe = 7 + rand() * 9;
    const edge = x > 1540 ? Math.max(0, (1568 - x) / 28) : 1;
    let grain = 0;
    for (let y = 0; y < H; y++) {
      const d = H - 1 - y, f = d / H;
      grain = grain * .5 + (rand() - .5) * .9;
      let v = f > .76 ? 0 : f > .12 ? .29 * Math.pow((.76 - f) / .64, .75) : .29 + (.12 - f) * .25;
      v += (x < 556 ? .04 : 0) * Math.max(0, 1 - f * 4);
      v += grain * v * .36;
      v *= edge;
      if (h && d < reach + fringe) {
        const k = Math.min(1, d / reach);
        let s = low + (top - low) * Math.pow(k, 1.2) + spike + grain * .16;
        if (d > reach) s = Math.min(s, .54 + spike * .2) - (d - reach) / fringe * .22;
        if (d < 8) s += (8 - d) * .008;
        v = Math.max(v, s);
      }
      if (h && d < 3) v = Math.max(v, .64 + (2 - d) * .09 + grain * .15 + (low > .6 ? .06 : -.02));
      const c = color(v), o = (y * W + x) * 4;
      img.data[o] = c[0]; img.data[o + 1] = c[1]; img.data[o + 2] = c[2]; img.data[o + 3] = 255;
    }
  }
  ctx.putImageData(img, 0, 0);
}
draw('left', leftCh, 7);
draw('right', rightCh, 41);
```
